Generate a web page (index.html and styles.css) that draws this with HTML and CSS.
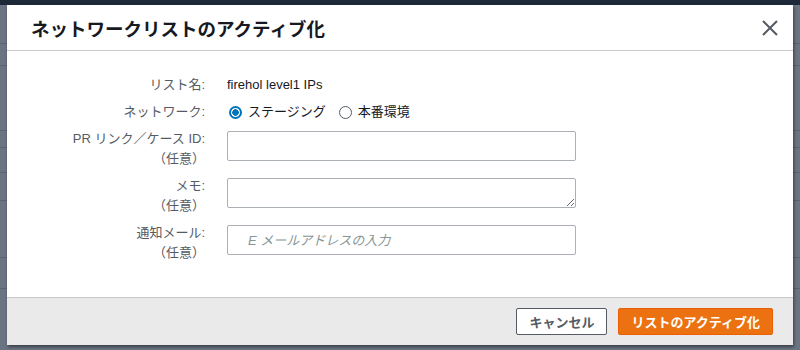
FILE: index.html
```html
<!DOCTYPE html>
<html lang="ja">
<head>
<meta charset="utf-8">
<link rel="stylesheet" href="styles.css">
</head>
<body>
<div class="modal">
  <div class="modal-header">
    <h1 class="title">ネットワークリストのアクティブ化</h1>
    <button class="close" aria-label="close">
      <svg width="16" height="16" viewBox="0 0 16 16"><path d="M1 1 L15 15 M15 1 L1 15" stroke="#545b64" stroke-width="2" fill="none"/></svg>
    </button>
  </div>
  <div class="modal-body">
    <div class="form">
      <div class="label">リスト名:</div>
      <div class="value">firehol level1 IPs</div>

      <div class="label">ネットワーク:</div>
      <div class="radios">
        <span class="radio checked"></span><span class="radio-text">ステージング</span>
        <span class="radio"></span><span class="radio-text">本番環境</span>
      </div>

      <div class="label two">PR リンク／ケース ID:<br>（任意）</div>
      <div class="ctl"><input class="input" type="text"></div>

      <div class="label two">メモ:<br>（任意）</div>
      <div class="ctl"><textarea class="input textarea"></textarea></div>

      <div class="label two">通知メール:<br>（任意）</div>
      <div class="ctl"><input class="input" type="text" placeholder="E メールアドレスの入力"></div>
    </div>
  </div>
  <div class="modal-footer">
    <button class="btn btn-cancel">キャンセル</button>
    <button class="btn btn-primary">リストのアクティブ化</button>
  </div>
</div>
</body>
</html>
```

FILE: styles.css
```css
html, body {
  margin: 0;
  height: 350px;
  overflow: hidden;
}
body {
  box-sizing: border-box;
  padding: 5px 7px 5px 7px;
  font-family: "Liberation Sans", "Noto Sans CJK JP", sans-serif;
  background:
    linear-gradient(#1d2939 0 5px, transparent 5px),
    linear-gradient(transparent 43px, #5a6472 43px 44px, transparent 44px 65px, #5a6472 65px 66px, transparent 66px 130px, #5a6472 130px 131px, transparent 131px 147px, #5a6472 147px 148px, transparent 148px 172px, #5a6472 172px 173px, transparent 173px 200px, #5a6472 200px 201px, transparent 201px 257px, #5a6472 257px 258px, transparent 258px 288px, #5a6472 288px 289px, transparent 289px),
    #6b7482;
}
.modal {
  height: 340px;
  background: #fff;
  display: flex;
  flex-direction: column;
  box-shadow: 1px 2px 3px rgba(0, 0, 0, 0.45);
}
.modal-header {
  height: 45px;
  flex: none;
  border-bottom: 1px solid #c9c9c9;
  display: flex;
  align-items: center;
  justify-content: space-between;
  padding: 0 15px 0 24px;
}
.title {
  margin: 0;
  font-size: 18.5px;
  font-weight: bold;
  color: #16191f;
  font-family: "Noto Sans CJK JP", sans-serif;
  line-height: 24px;
}
.close {
  border: 0;
  background: none;
  padding: 0;
  width: 16px;
  height: 16px;
  display: flex;
}
.modal-body {
  flex: 1;
  padding: 24px 20px 0;
}
.form {
  display: grid;
  grid-template-columns: 178px 349px;
  column-gap: 22px;
  row-gap: 7px;
  font-size: 13px;
  line-height: 20px;
}
.label {
  text-align: right;
  color: #545b64;
}
.value {
  color: #16191f;
}
.radios {
  display: flex;
  align-items: center;
  color: #16191f;
}
.radio {
  width: 11px;
  height: 11px;
  border: 1px solid #545b64;
  border-radius: 50%;
  margin-left: 2px;
  margin-right: 6px;
  box-sizing: content-box;
  position: relative;
}
.radio.checked {
  border: 2px solid #0073bb;
  width: 9px;
  height: 9px;
  background: radial-gradient(circle, #0073bb 0 3px, #fff 3.5px);
}
.radio-text {
  margin-right: 11px;
}
.ctl {
  padding-top: 2px;
}
.input {
  display: block;
  box-sizing: border-box;
  width: 349px;
  height: 30px;
  margin: 0;
  border: 1px solid #aab0b5;
  border-radius: 2px;
  background: #fff;
  font-family: inherit;
  font-size: 13px;
  padding: 0 20px;
  outline: none;
}
.textarea {
  resize: vertical;
  padding: 4px 8px;
}
.input::placeholder {
  color: #879596;
  font-style: italic;
}
.modal-footer {
  height: 48px;
  flex: none;
  box-sizing: border-box;
  border-top: 1px solid #c9c9c9;
  background: #eaeaea;
  display: flex;
  align-items: center;
  justify-content: flex-end;
  gap: 11px;
  padding: 0 20px;
}
.btn {
  height: 27px;
  padding: 0 12px;
  font-family: "Noto Sans CJK JP", sans-serif;
  font-size: 13px;
  font-weight: bold;
  border-radius: 2px;
  line-height: 1;
}
.btn-cancel {
  background: #fff;
  color: #545b64;
  border: 1px solid #545b64;
}
.btn-primary {
  background: #ec7211;
  color: #fff;
  border: 1px solid #eb5f07;
}
```
